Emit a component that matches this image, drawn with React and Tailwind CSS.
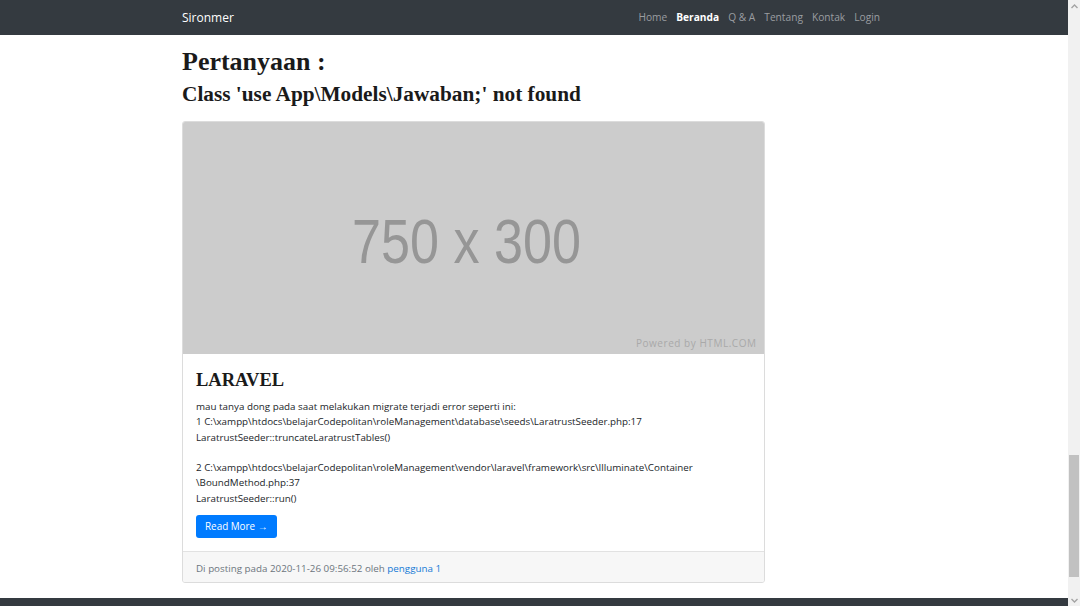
const serif = "font-['Liberation_Serif','DejaVu_Serif',serif]";

const navLinks = [
  { label: "Home" },
  { label: "Beranda", active: true },
  { label: "Q & A" },
  { label: "Tentang" },
  { label: "Kontak" },
  { label: "Login" },
];

function Navbar() {
  return (
    <nav className="h-[35px] shrink-0 bg-[#343a40]">
      <div className="ml-[182px] flex h-full w-[698px] items-center justify-between">
        <a className="text-[12px] text-white">Sironmer</a>
        <ul className="flex items-center gap-[9px] text-[10.2px]">
          {navLinks.map((link) => (
            <li
              key={link.label}
              className={
                link.active ? "font-bold text-white" : "text-[#9a9da0]"
              }
            >
              {link.label}
            </li>
          ))}
        </ul>
      </div>
    </nav>
  );
}

// placeholder image, drawn like the 750x300 dummy picture
function Placeholder() {
  return (
    <svg
      viewBox="0 0 581 232"
      className="block h-[232px] w-full"
      preserveAspectRatio="none"
    >
      <rect width="581" height="232" fill="#cccccc" />
      <text
        x="169"
        y="141"
        fill="#969696"
        fontSize="63"
        fontFamily="Liberation Sans, Arial, sans-serif"
        textLength="229"
        lengthAdjust="spacingAndGlyphs"
      >
        750 x 300
      </text>
      <text
        x="453"
        y="225"
        fill="#a9a9a9"
        fontSize="10"
        fontFamily="Open Sans, sans-serif"
        textLength="120"
        lengthAdjust="spacing"
      >
        Powered by HTML.COM
      </text>
    </svg>
  );
}

function PostCard() {
  return (
    <div className="mt-[13px] overflow-hidden rounded-[3px] border border-[#dcdcdc] bg-white">
      <Placeholder />
      <div className="px-[13px] pt-[15px] pb-[13px]">
        <h2 className={`${serif} text-[18.5px] leading-[1.2] font-bold text-[#1a1a1a]`}>
          LARAVEL
        </h2>
        <p className="mt-[8px] text-[9.8px] leading-[15.3px] text-[#212529]">
          mau tanya dong pada saat melakukan migrate terjadi error seperti ini:
          <br />
          1 C:\xampp\htdocs\belajarCodepolitan\roleManagement\database\seeds\LaratrustSeeder.php:17
          <br />
          LaratrustSeeder::truncateLaratrustTables()
          <br />
          <br />
          2 C:\xampp\htdocs\belajarCodepolitan\roleManagement\vendor\laravel\framework\src\Illuminate\Container
          <br />
          \BoundMethod.php:37
          <br />
          LaratrustSeeder::run()
        </p>
        <button className="mt-[9px] flex h-[23px] items-center rounded-[3px] bg-[#007bff] px-[9px] text-[9.9px] text-white">
          Read More &rarr;
        </button>
      </div>
      <div className="h-[31px] border-t border-[#e2e2e2] bg-[#f7f7f7] px-[13px] pt-[9px]">
        <p className="text-[9.8px] leading-[15px] text-[#6c757d]">
          <span>Di posting pada 2020-11-26 09:56:52 oleh </span>
          <a className="text-[#1479d6]">pengguna 1</a>
        </p>
      </div>
    </div>
  );
}

function Scrollbar() {
  return (
    <div className="flex h-full w-[12px] shrink-0 flex-col bg-[#f1f1f1]">
      <div className="flex h-[12px] items-center justify-center">
        <svg width="7" height="5" viewBox="0 0 7 5">
          <path d="M0.5 4 L3.5 1 L6.5 4" stroke="#a3a3a3" strokeWidth="1.4" fill="none" />
        </svg>
      </div>
      <div className="flex-1" />
      <div className="mx-[1px] h-[122px] bg-[#c1c1c1]" />
      <div className="h-[17px]" />
      <div className="flex h-[12px] items-center justify-center">
        <svg width="7" height="5" viewBox="0 0 7 5">
          <path d="M0.5 1 L3.5 4 L6.5 1" stroke="#a3a3a3" strokeWidth="1.4" fill="none" />
        </svg>
      </div>
    </div>
  );
}

export default function App() {
  return (
    <div className="flex h-[606px] w-[1080px] overflow-hidden bg-white font-['Open_Sans','Noto_Sans',sans-serif]">
      <div className="flex h-full flex-1 flex-col">
        <Navbar />
        <main className="ml-[182px] w-[583px] flex-1">
          <h1 className={`${serif} mt-[11px] text-[26px] leading-[1.2] font-bold text-[#1a1a1a]`}>
            Pertanyaan :
          </h1>
          <h3 className={`${serif} mt-[5px] text-[21.3px] leading-[1.2] font-bold text-[#1a1a1a]`}>
            Class 'use App\Models\Jawaban;' not found
          </h3>
          <PostCard />
        </main>
        <footer className="h-[8px] shrink-0 bg-[#343a40]" />
      </div>
      <Scrollbar />
    </div>
  );
}
